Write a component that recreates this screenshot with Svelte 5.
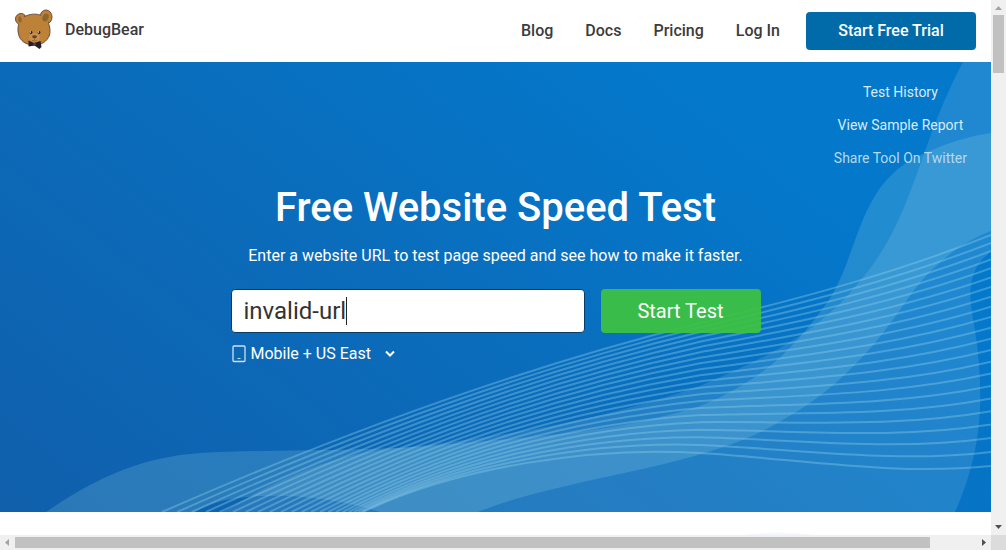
<script lang="ts">
  let url = $state('invalid-url');
  let device = $state('Mobile + US East');

  const nav = ['Blog', 'Docs', 'Pricing', 'Log In'];
  const sideLinks = ['Test History', 'View Sample Report', 'Share Tool On Twitter'];

  const LINE_COUNT = 22;
  const mix = (a: number, b: number, t: number) => Math.round((a + (b - a) * t) * 10) / 10;

  // Fan of curves that spreads out from the lower left to the right edge.
  const lines = Array.from({ length: LINE_COUNT }, (_, i) => {
    const t = i / (LINE_COUNT - 1);
    const s = 1 - Math.pow(1 - t, 1.6);
    const m = 0.7 * t + 0.3 * t * t;
    return `M${mix(162, 363, s)} 450 C${mix(342, 453, s)} ${mix(371, 406, t)} ${mix(520, 590, t)} ${mix(306, 384, m)} 700 ${mix(261, 391, m)} C${mix(797, 800, m)} ${mix(237, 397, m)} 894 ${mix(212, 414, m)} 991 ${mix(173, 404, m)}`;
  });
</script>

<div class="window">
  <div class="page">
    <header>
      <a class="brand" href="#home">
        <svg width="40" height="42" viewBox="0 0 40 42" aria-hidden="true">
          <g fill="#bd8138" stroke="#6e4a3c" stroke-width="1">
            <circle cx="7" cy="10" r="5.500" />
            <ellipse cx="32" cy="8" rx="6" ry="7" />
            <path d="M5 14C8 5 24 2 31 9C35 13 37 20 35.500 26C33 33 27 36 20 36C12 36 6 32 4.500 25C3.500 21 4 17 5 14Z" />
          </g>
          <circle cx="8" cy="12" r="4.500" fill="#bd8138" />
          <ellipse cx="30" cy="10.500" rx="4.500" ry="5.500" fill="#bd8138" />
          <ellipse cx="6" cy="10.500" rx="1.600" ry="3" fill="#8b6630" transform="rotate(-8 6 10.500)" />
          <ellipse cx="31.500" cy="8.500" rx="3" ry="4" fill="#8b6630" transform="rotate(25 31.500 8.500)" />
          <ellipse cx="20.500" cy="28.500" rx="5.500" ry="4.500" fill="#c98f4e" />
          <circle cx="17" cy="23.500" r="1.400" fill="#2c2020" />
          <circle cx="25" cy="23.500" r="1.400" fill="#2c2020" />
          <circle cx="16.300" cy="23" r=".7" fill="#fff" />
          <circle cx="24.300" cy="23" r=".7" fill="#fff" />
          <path d="M18 27Q20.500 25.500 23 27Q22.500 29.500 20.500 29.500Q18.500 29.500 18 27Z" fill="#6b4028" />
          <path d="M20.500 29V31M18 31.500Q20.500 32.500 23 31" fill="none" stroke="#94602f" stroke-width=".8" />
          <path d="M14.500 31.500L20 34L26.500 32L27.500 38L25.500 40L20.500 36.500L14.500 37.500Z" fill="#241e29" />
          <circle cx="20.500" cy="35.200" r="1.400" fill="#4a4048" />
        </svg>
        <span>DebugBear</span>
      </a>
      <nav>
        {#each nav as item}
          <a href="#{item.toLowerCase().replace(' ', '-')}">{item}</a>
        {/each}
        <a class="trial" href="#trial">Start Free Trial</a>
      </nav>
    </header>

    <main>
      <svg class="waves" viewBox="0 0 991 450" preserveAspectRatio="none" aria-hidden="true">
        <path
          fill="#9adce6"
          fill-opacity=".2"
          d="M46 450C100 413 145 395 200 391C270 387 380 390 450 382C550 374 625 368 700 344C765 318 798 282 829 238C862 186 857 116 930 89C950 80 970 74 991 71V169C960 181 930 204 907 238C870 292 830 338 750 375C670 409 550 420 478 450H380C330 433 235 424 195 450Z"
        />
        <path
          fill="#bee6f0"
          fill-opacity=".15"
          d="M223 450C280 415 340 390 400 386C500 375 600 359 700 324C765 296 815 273 855 225C915 158 915 90 963 0H991V190C962 210 971 244 975 268C984 330 984 385 955 450Z"
        />
        <g fill="none" stroke="#8fd0ea" stroke-opacity=".38" stroke-width="2">
          {#each lines as d}
            <path {d} />
          {/each}
        </g>
      </svg>

      <ul class="side">
        {#each sideLinks as item, i}
          <li><a class:faint={i === 2} href="#link-{i}">{item}</a></li>
        {/each}
      </ul>

      <section class="tool">
        <h1>Free Website Speed Test</h1>
        <p>Enter a website URL to test page speed and see how to make it faster.</p>
        <form onsubmit={(e) => e.preventDefault()}>
          <div class="row">
            <div class="field">
              <input type="text" aria-label="Website URL" bind:value={url} />
              <span class="caret"></span>
            </div>
            <button type="submit">Start Test</button>
          </div>
          <label class="device">
            <svg width="14" height="18" viewBox="0 0 14 18" aria-hidden="true">
              <rect x="1" y="1" width="12" height="15.500" rx="1" fill="none" stroke="#fff" stroke-opacity=".8" stroke-width="1.300" />
              <path d="M5.500 13.500H8.500" stroke="#fff" stroke-opacity=".8" />
            </svg>
            <select aria-label="Test device and location" bind:value={device}>
              <option>Mobile + US East</option>
              <option>Desktop + US East</option>
            </select>
            <svg class="chevron" width="10" height="8" viewBox="0 0 10 8" aria-hidden="true">
              <path d="M1 1.500L5 5.500L9 1.500" fill="none" stroke="#fff" stroke-width="2" />
            </svg>
          </label>
        </form>
      </section>
    </main>
    <div class="below">
      <svg width="72" height="3" viewBox="0 0 72 3" aria-hidden="true">
        <path d="M0 3Q36 -2 72 3Z" fill="#f4f7fd" />
      </svg>
    </div>
  </div>

  <div class="bar vertical" aria-hidden="true">
    <svg width="15" height="15"><path d="M4 10L7.500 6L11 10Z" fill="#a3a3a3" /></svg>
    <div class="track"><div class="thumb"></div></div>
    <svg width="15" height="15"><path d="M4 5L7.500 9L11 5Z" fill="#505050" /></svg>
  </div>
  <div class="bar horizontal" aria-hidden="true">
    <svg width="15" height="15"><path d="M9 4L5 7.500L9 11Z" fill="#a3a3a3" /></svg>
    <div class="track"><div class="thumb"></div></div>
    <svg width="15" height="15"><path d="M6 4L10 7.500L6 11Z" fill="#505050" /></svg>
  </div>
  <div class="corner"></div>
</div>

<style>
  :global(body) {
    margin: 0;
    font-family: Roboto, 'Liberation Sans', sans-serif;
    font-size: 16px;
    color: #3b3b3b;
  }
  .window {
    display: grid;
    grid-template-columns: minmax(0, 1fr) 15px;
    grid-template-rows: minmax(0, 1fr) 15px;
    height: 100vh;
    background: #fff;
  }
  .page {
    display: flex;
    flex-direction: column;
    overflow: hidden;
  }
  a {
    color: inherit;
    text-decoration: none;
  }
  header {
    display: flex;
    align-items: center;
    justify-content: space-between;
    flex: none;
    box-sizing: border-box;
    height: 62px;
    padding: 0 15px 0 14px;
    font-weight: 500;
    line-height: 38px;
  }
  .brand {
    display: flex;
    align-items: center;
    gap: 11px;
    padding-bottom: 2px;
  }
  nav {
    display: flex;
    align-items: center;
    gap: 32px;
  }
  .trial {
    width: 170px;
    margin-left: -6px;
    border-radius: 4px;
    background: #006ba8;
    color: #fff;
    text-align: center;
  }
  main {
    position: relative;
    display: flex;
    flex-direction: column;
    flex: 1 0 auto;
    box-sizing: border-box;
    padding-top: 20px;
    background: linear-gradient(38deg, #105fab 0%, #0a6dbc 45%, #0478cb 78%);
    color: #fff;
  }
  .waves {
    position: absolute;
    inset: 0;
    width: 100%;
    height: 100%;
  }
  .side {
    position: relative;
    align-self: flex-end;
    display: flex;
    flex-direction: column;
    gap: 13px;
    margin: 0 24px 0 0;
    padding: 0;
    list-style: none;
    font-size: 14px;
    line-height: 20px;
    text-align: center;
    color: #d9eaf7;
  }
  .side .faint {
    color: #b4d8f0;
  }
  .tool {
    position: relative;
    width: 530px;
    margin: 0 auto;
    padding: 16px 0 147px;
  }
  h1 {
    margin: 0;
    font-size: 40px;
    font-weight: 500;
    line-height: 48px;
    text-align: center;
  }
  p {
    margin: 14px 0 23px;
    line-height: 20px;
    text-align: center;
  }
  .row {
    display: flex;
    gap: 16px;
  }
  .field {
    position: relative;
    flex: 1;
  }
  input {
    display: block;
    box-sizing: border-box;
    width: 100%;
    height: 44px;
    padding: 0 12px;
    border: 1px solid #063d68;
    border-radius: 4px;
    background: #fff;
    color: #333;
    font: 24px Roboto, 'Liberation Sans', sans-serif;
    outline: none;
  }
  .caret {
    position: absolute;
    left: 115px;
    top: 8px;
    width: 1px;
    height: 28px;
    background: #222;
  }
  button {
    width: 160px;
    height: 44px;
    padding: 0;
    border: 0;
    border-radius: 4px;
    background: rgba(61, 194, 65, 0.93);
    color: #fff;
    font: 20px Roboto, 'Liberation Sans', sans-serif;
  }
  form {
    display: flex;
    flex-direction: column;
  }
  .device {
    display: flex;
    align-items: center;
    align-self: flex-start;
    gap: 5px;
    margin: 11px 0 0 1px;
    line-height: 20px;
  }
  select {
    appearance: none;
    width: 129px;
    height: 20px;
    padding: 0;
    border: 0;
    background: none;
    color: #fff;
    font: inherit;
  }
  .below {
    flex: none;
    display: flex;
    align-items: flex-end;
    height: 23px;
    padding-left: 75%;
  }
  .bar {
    display: flex;
    background: #f0f0f0;
  }
  .bar svg {
    flex: none;
  }
  .vertical {
    flex-direction: column;
  }
  .track {
    flex: 1;
    display: flex;
  }
  .thumb {
    background: #c1c1c1;
  }
  .vertical .thumb {
    width: 11px;
    height: 58px;
    margin: 0 2px;
  }
  .horizontal .thumb {
    width: 95.2%;
    height: 11px;
    margin: 2px 0;
  }
  .corner {
    background: #dcdcdc;
  }
</style>
